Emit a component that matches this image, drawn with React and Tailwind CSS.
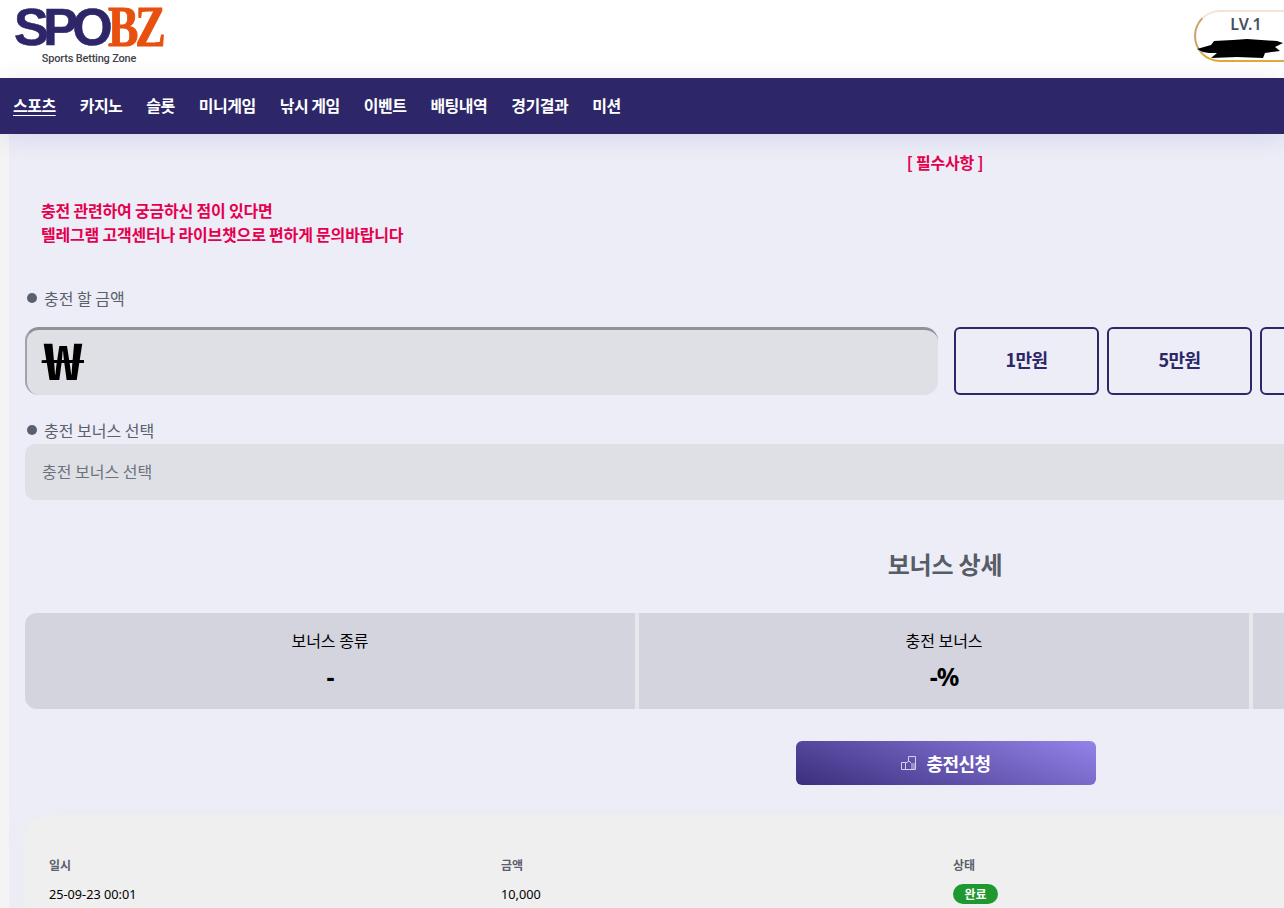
const navItems = ["스포츠", "카지노", "슬롯", "미니게임", "낚시 게임", "이벤트", "배팅내역", "경기결과", "미션"];
const amounts = ["1만원", "5만원", "10만원", "50만원", "100만원", "초기화"];
const stats = [
  { label: "보너스 종류", value: "-" },
  { label: "충전 보너스", value: "-%" },
  { label: "최대 보너스", value: "-" }
];

function Logo() {
  return (
    <div className="flex w-[150px] flex-col items-center pt-[5px]">
      <div className="flex h-[44px] w-[150px] items-center text-[52px] leading-[44px] font-bold">
        <span className="font-['Liberation_Sans'] tracking-[-5.5px] text-[#2d2769] [-webkit-text-stroke:0.6px_#2d2769]">SPO</span>
        <span className="ml-[1px] inline-block origin-left scale-x-[0.8] font-['Liberation_Serif'] text-[57px] leading-[44px] tracking-[-4px] text-[#e8500f] [-webkit-text-stroke:1px_#e8500f]">BZ</span>
      </div>
      <span className="mt-[3px] font-['Roboto'] text-[11px] leading-[14px] font-medium tracking-[-0.2px] whitespace-nowrap text-[#44444c]">Sports Betting Zone</span>
    </div>
  );
}

function LevelBadge() {
  return (
    <div className="relative mr-[-14px] flex h-[52px] w-[104px] justify-center rounded-l-[26px] border-2 border-r-0 border-t-[#f5e4d6] border-b-[#dfa93b] border-l-[#c9a469] pt-[1px]">
      <span className="ml-[-2px] font-['Noto_Sans'] text-[16px] leading-[22px] font-semibold text-[#465063]">LV.1</span>
      <svg className="absolute left-[1px] top-[26px]" width="88" height="22" viewBox="0 0 88 22">
        <path d="M0 11 L14 7 L17 3 L36 2 L50 1 L80 3 L86 5 L78 9 L83 13 L68 15 L66 20 L40 19 L14 20 L20 15 L12 15 L6 14 Z" fill="#000" />
      </svg>
    </div>
  );
}

function ThumbIcon() {
  return (
    <svg width="16" height="16" viewBox="0 0 16 16" fill="none" stroke="#d5d0ee" strokeWidth="1">
      <path d="M0.5 7.5h4v7h-4z" />
      <path d="M4.5 8l3-1.5V1.5h7v13h-10" />
      <path d="M10 9h5M10 11h5M10 13h5M8 6l2 2" />
    </svg>
  );
}

function Label({ children }) {
  return (
    <div className="flex items-center gap-[7px] text-[16px] leading-[22px] text-[#5a606c]">
      <span className="h-[10px] w-[10px] rounded-full bg-[#5a6070]" />
      {children}
    </div>
  );
}

export default function App() {
  return (
    <div className="h-screen w-full overflow-hidden bg-white font-['Noto_Sans_CJK_KR','Noto_Sans',sans-serif]">
      <header className="flex h-[78px] items-start justify-between pl-[14px]">
        <Logo />
        <div className="pt-[10px]">
          <LevelBadge />
        </div>
      </header>

      <nav className="relative z-10 flex h-[56px] items-center gap-[24px] bg-[#2d2769] pb-[2px] pl-[13px] shadow-[0_4px_24px_rgba(60,50,170,0.12)]">
        {navItems.map((item, i) => (
          <a key={item} className={`text-[16px] leading-[22px] font-semibold tracking-[-0.5px] whitespace-nowrap text-white ${i === 0 ? "underline underline-offset-[3px]" : ""}`}>
            {item}
          </a>
        ))}
      </nav>

      <div className="flex h-[774px]">
        <div className="w-[9px] shrink-0 bg-[#f4f4f4]" />
        <main className="w-[1872px] shrink-0 bg-[#ecedf6] px-[16px] pt-[17px]">
          <p className="h-[22px] text-center text-[16px] leading-[22px] font-bold tracking-[-0.2px] text-[#e4004f]">[ 필수사항 ]</p>

          <div className="mt-[25px] pl-[16px] text-[16px] leading-[24px] font-bold tracking-[-0.2px] text-[#e4004f]">
            <p>충전 관련하여 궁금하신 점이 있다면</p>
            <p>텔레그램 고객센터나 라이브챗으로 편하게 문의바랍니다</p>
          </div>

          <div className="mt-[41px] pl-[2px]">
            <Label>충전 할 금액</Label>
          </div>

          <div className="mt-[18px] flex gap-[16px]">
            <div className="flex h-[68px] w-[913px] shrink-0 items-center rounded-[14px] border-t-[3px] border-l-[2px] border-t-[#8f9297] border-l-[#a0a3a8] bg-[#dee0e5] pl-[16px]">
              <span className="mt-[-10px] inline-block origin-left scale-x-[1.35] text-[50px] leading-none font-bold text-black">₩</span>
            </div>
            <div className="flex gap-[8px]">
              {amounts.map((a) => (
                <button key={a} className="h-[68px] w-[145px] rounded-[6px] border-2 border-[#2d2769] pb-[3px] text-[18px] font-bold tracking-[-0.5px] text-[#2d2769]">
                  {a}
                </button>
              ))}
            </div>
          </div>

          <div className="mt-[24px] pl-[2px]">
            <Label>충전 보너스 선택</Label>
          </div>
          <div className="mt-[3px] flex h-[56px] items-center rounded-[10px] bg-[#dee0e5] pb-[2px] pl-[17px] text-[16px] text-[#6c727c]">
            충전 보너스 선택
          </div>

          <h2 className="mt-[46px] text-center text-[24px] leading-[36px] font-bold tracking-[-0.2px] text-[#565c68]">보너스 상세</h2>

          <div className="mt-[31px] grid h-[96px] w-[1840px] grid-cols-[610px_610px_1fr] gap-[4px] overflow-hidden rounded-[12px] bg-[#e8e8ec]">
            {stats.map((s) => (
              <div key={s.label} className="flex flex-col items-center bg-[#d4d4de] pt-[16px] text-black">
                <span className="text-[16px] leading-[22px]">{s.label}</span>
                <span className="mt-[8px] font-['Noto_Sans'] text-[25px] leading-[34px] font-bold tracking-[-1px]">{s.value}</span>
              </div>
            ))}
          </div>

          <div className="mt-[32px] flex justify-center pl-[2px]">
            <button className="flex h-[44px] w-[300px] items-center justify-center gap-[9px] rounded-[6px] bg-[linear-gradient(200deg,#9483ea,#3a2e7c)] text-[18px] font-bold tracking-[-0.5px] text-white">
              <ThumbIcon />
              충전신청
            </button>
          </div>

          <div className="mt-[31px] h-[200px] w-[1840px] rounded-[24px] bg-[#efefef] pl-[24px] pt-[39px] shadow-[0_0_16px_rgba(240,240,240,0.7)]">
            <div className="grid grid-cols-[452px_452px_452px_1fr] text-[12px] text-[#5a606c]">
              <span className="font-bold leading-[20px]">일시</span>
              <span className="font-bold leading-[20px]">금액</span>
              <span className="font-bold leading-[20px]">상태</span>
              <span />
            </div>
            <div className="mt-[9px] grid grid-cols-[452px_452px_452px_1fr] items-center text-[12.7px] text-black">
              <span className="font-['Noto_Sans'] leading-[20px]">25-09-23 00:01</span>
              <span className="font-['Noto_Sans'] leading-[20px]">10,000</span>
              <span className="flex h-[20px] w-[45px] items-center justify-center rounded-full bg-[#1e982f] text-[12px] font-bold text-white">완료</span>
              <span />
            </div>
          </div>
        </main>
      </div>
    </div>
  );
}
